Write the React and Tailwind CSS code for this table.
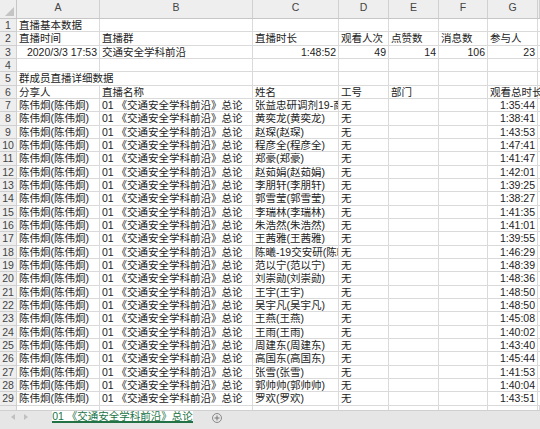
import React from "react";

const cols = [
  { key: "A", w: "w-[83px]" },
  { key: "B", w: "w-[153px]" },
  { key: "C", w: "w-[86px]" },
  { key: "D", w: "w-[50px]" },
  { key: "E", w: "w-[50px]" },
  { key: "F", w: "w-[49px]" },
  { key: "G", w: "w-[50px]" },
  { key: "H", w: "w-[2px]" },
];

const names = [
  ["张益忠研调剂19-商(张益忠)", "1:35:44"],
  ["黄奕龙(黄奕龙)", "1:38:41"],
  ["赵琛(赵琛)", "1:43:53"],
  ["程彦全(程彦全)", "1:47:41"],
  ["郑豪(郑豪)", "1:41:47"],
  ["赵茹娟(赵茹娟)", "1:42:01"],
  ["李朋轩(李朋轩)", "1:39:25"],
  ["郭雪莹(郭雪莹)", "1:38:27"],
  ["李瑞林(李瑞林)", "1:41:35"],
  ["朱浩然(朱浩然)", "1:41:01"],
  ["王茜雅(王茜雅)", "1:39:55"],
  ["陈曦-19交安研(陈曦)", "1:46:29"],
  ["范以宁(范以宁)", "1:48:39"],
  ["刘崇勋(刘崇勋)", "1:48:36"],
  ["王宇(王宇)", "1:48:50"],
  ["吴宇凡(吴宇凡)", "1:48:50"],
  ["王燕(王燕)", "1:45:08"],
  ["王雨(王雨)", "1:40:02"],
  ["周建东(周建东)", "1:43:40"],
  ["高国东(高国东)", "1:45:44"],
  ["张雪(张雪)", "1:41:53"],
  ["郭帅帅(郭帅帅)", "1:40:04"],
  ["罗欢(罗欢)", "1:43:51"],
];

// each cell: [text, "r" for right aligned, "o" for overflow]
const rows = [
  [["直播基本数据"], [""], [""], [""], [""], [""], [""], [""]],
  [["直播时间"], ["直播群"], ["直播时长"], ["观看人次"], ["点赞数"], ["消息数"], ["参与人"], [""]],
  [["2020/3/3 17:53", "r"], ["交通安全学科前沿"], ["1:48:52", "r"], ["49", "r"], ["14", "r"], ["106", "r"], ["23", "r"], [""]],
  [[""], [""], [""], [""], [""], [""], [""], [""]],
  [["群成员直播详细数据", "o"], [""], [""], [""], [""], [""], [""], [""]],
  [["分享人"], ["直播名称"], ["姓名"], ["工号"], ["部门"], [""], ["观看总时长", "o"], [""]],
  ...names.map(([n, t]) => [
    ["陈伟炯(陈伟炯)"],
    ["01 《交通安全学科前沿》总论"],
    [n],
    ["无"],
    [""],
    [""],
    [t, "r"],
    [""],
  ]),
];

const Cell = ({ w, text, mode, noRight }) => (
  <div
    className={`${w} h-full shrink-0 border-b border-[#dadada] ${
      noRight ? "" : "border-r"
    } ${mode === "o" ? "overflow-visible relative z-10" : "overflow-hidden"} whitespace-nowrap px-[2px] leading-[13px] ${
      mode === "r" ? "text-right" : "text-left"
    }`}
  >
    {text}
  </div>
);

export default function App() {
  return (
    <div
      className="w-[540px] h-[429px] overflow-hidden bg-white text-[10.5px] text-[#222] flex flex-col"
      style={{ fontFamily: '"Liberation Sans", "Noto Sans CJK SC", sans-serif' }}
    >
      {/* column headers */}
      <div className="flex h-[19px] shrink-0 bg-[#eeeeee] border-b border-[#c6c6c6] text-[#444]">
        <div className="w-[17px] shrink-0 border-r border-[#c6c6c6] relative">
          <svg className="absolute right-[2px] bottom-[2px]" width="9" height="9" viewBox="0 0 9 9">
            <polygon points="9,0 9,9 0,9" fill="#c4c4c4" />
          </svg>
        </div>
        {cols.map((c) => (
          <div
            key={c.key}
            className={`${c.w} shrink-0 border-r border-[#d0d0d0] flex items-end justify-center pb-[2px] overflow-hidden`}
          >
            {c.key !== "H" && c.key}
          </div>
        ))}
      </div>

      {/* rows */}
      {rows.map((r, i) => (
        <div key={i} className="flex h-[13.33px] shrink-0">
          <div className="w-[17px] shrink-0 bg-[#eeeeee] border-r border-b border-[#d0d0d0] text-[#444] text-center leading-[13px]">
            {i + 1}
          </div>
          {r.map(([text, mode], j) => (
            <Cell
              key={j}
              w={cols[j].w}
              text={text}
              mode={mode}
              noRight={i === 4 && j === 0}
            />
          ))}
        </div>
      ))}

      {/* partial row 30 */}
      <div className="flex h-[4px] shrink-0">
        <div className="w-[17px] shrink-0 bg-[#eeeeee] border-r border-[#d0d0d0]" />
        {cols.map((c) => (
          <div key={c.key} className={`${c.w} shrink-0 border-r border-[#dadada]`} />
        ))}
      </div>

      {/* sheet tabs */}
      <div className="flex-1 flex items-start bg-[#e6e6e6] border-t border-[#d0d0d0]">
        <div className="w-[52px] h-[12px] flex items-center gap-[9px] pl-[11px] text-[#bdbdbd]">
          <svg width="4" height="6" viewBox="0 0 4 6">
            <polygon points="4,0 4,6 0,3" fill="#c0c0c0" />
          </svg>
          <svg width="4" height="6" viewBox="0 0 4 6">
            <polygon points="0,0 0,6 4,3" fill="#c0c0c0" />
          </svg>
        </div>
        <div className="w-[141px] h-[12px] bg-white border-b-2 border-[#217346] text-[#217346] flex items-center justify-center leading-[10px] whitespace-nowrap">
          01 《交通安全学科前沿》总论
        </div>
        <div className="ml-[19px] mt-[2px] w-[10px] h-[10px] rounded-full border border-[#8a8a8a] flex items-center justify-center">
          <svg width="6" height="6" viewBox="0 0 6 6">
            <path d="M3 0.5V5.5M0.5 3H5.5" stroke="#777" strokeWidth="1" />
          </svg>
        </div>
      </div>
    </div>
  );
}
